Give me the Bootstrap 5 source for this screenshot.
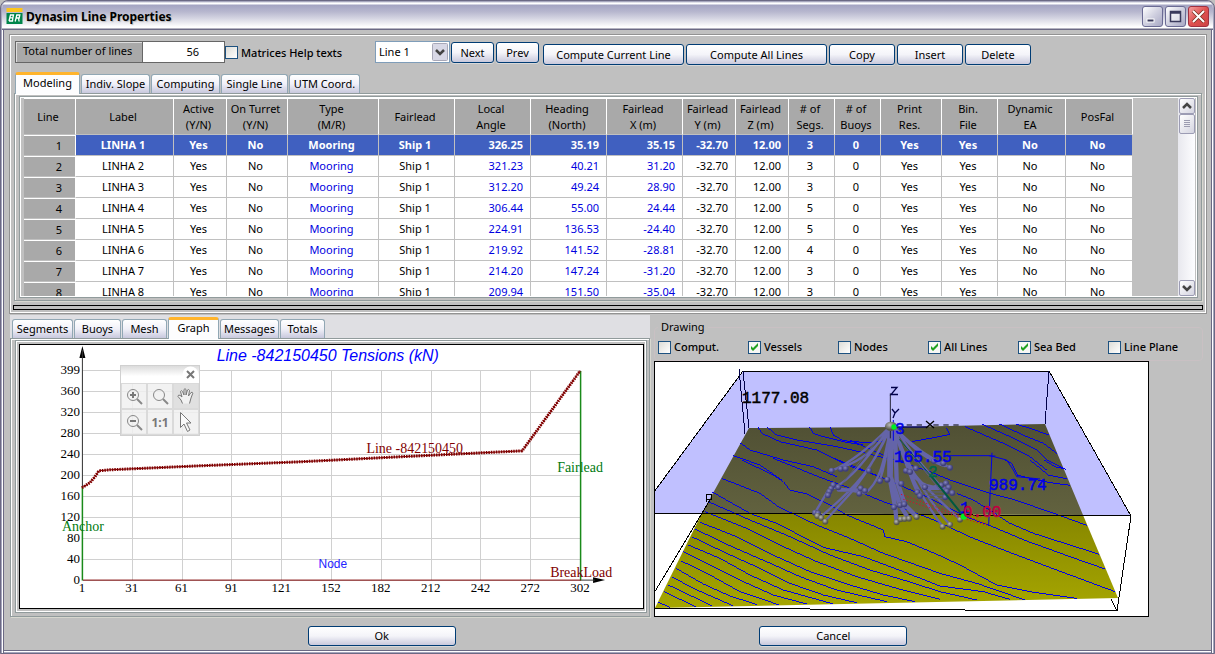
<!DOCTYPE html>
<html lang="en">
<head>
<meta charset="utf-8">
<meta name="viewport" content="width=device-width, initial-scale=1">
<title>Dynasim Line Properties</title>
<link href="https://cdn.jsdelivr.net/npm/bootstrap@5.3.0/dist/css/bootstrap.min.css" rel="stylesheet">
<style>
  body { background:#c0c0c0; font-family:"Noto Sans","Open Sans",sans-serif; font-size:11px; line-height:16px; color:#000; }
  .win { min-height:100vh; background:#c0c0c0; border:1px solid #6b6984; border-radius:8px 8px 0 0; box-shadow:inset 1px 0 0 #a5a5bd, inset -1px 0 0 #a5a5bd, inset 2px 0 0 #fff, inset -2px 0 0 #fff, inset 3px 0 0 #6b6984, inset -3px 0 0 #6b6984, inset 0 -1px 0 #a5a5bd, inset 0 -2px 0 #fff, inset 0 -3px 0 #6b6984; padding:0 3px 3px; }
  .titlebar { height:29px; margin:0 -2px; padding:2px 4px 0 4px; gap:3px; border-radius:7px 7px 0 0; background:linear-gradient(#8a8aa8 0,#fff 2px,#fff 3px,#a4a4c2 4px,#b8b8cf 11px,#d8d8e4 18px,#fff 26px,#fff 27px,#6b6984 28px); }
  .titlebar h1 { font-size:12px; line-height:16px; font-weight:700; margin:0; text-shadow:1px 1px 1px #bbb; }
  .capbtn { width:21px; height:21px; padding:0; border:1px solid #6b6b94; border-radius:3px; background:linear-gradient(135deg,#fff,#d0d0e0 50%,#a8a8c4); display:flex; }
  .capbtn.shut { background:linear-gradient(135deg,#f4a0a0,#e05050 50%,#cc4444); border-color:#a03040; }
  .etched { border:1px solid #929292; box-shadow:inset 0 0 0 1px #fff; }
  .upper { margin:4px 4px 0 5px; padding:6px 4px 3px; }
  .toolrow { height:24px; padding-left:1px; }
  .total { border:2px solid #666; border-width:1px; height:22px; flex:0 0 210px; }
  .total label { flex:0 0 127px; background:#a9a9a9; border-right:1px solid #666; box-shadow:inset 1px 1px 0 #ddd; padding:0 0 0 7px; line-height:18px; }
  .total input { width:81px; border:0; padding:0 25px 1px 0; text-align:right; }
  input.tick { appearance:none; width:13px; height:13px; margin:0; border:1px solid #1c5180; background:linear-gradient(135deg,#dcdcd7,#fff); flex:none; }
  input.tick:checked { background:#f7f7f5 url("data:image/svg+xml,%3Csvg xmlns='http://www.w3.org/2000/svg' viewBox='0 0 11 11'%3E%3Cpath d='M2 4v3l2 2 5-5V1L4 6z' fill='%2321a121'/%3E%3C/svg%3E"); }
  .tlabel { font-weight:500; }
  .helpbox { height:23px; width:150px; gap:3px; }
  .linesel { width:75px; height:22px; border:1px solid #7f9db9; background:#fff url("data:image/svg+xml,%3Csvg xmlns='http://www.w3.org/2000/svg' viewBox='0 0 16 18'%3E%3Crect x='.5' y='.5' width='15' height='17' rx='1' fill='%23d8d8e6' stroke='%23a8a8b8'/%3E%3Cpath d='M4 7l4 4 4-4' fill='none' stroke='%23444' stroke-width='2.500'/%3E%3C/svg%3E") no-repeat right 1px center/16px 18px; appearance:none; padding:0 0 0 3px; }
  .xbtn { height:21px; padding:0; border:1px solid #003c74; border-radius:3px; background:linear-gradient(#fff,#f4f4f9 50%,#c9c9dc); box-shadow:0 1px 0 #d8d8d8; color:#000; font-size:11px; line-height:18px; text-align:center; white-space:nowrap; }
  .steps { gap:2px; padding:1px 4px 0 1px; }
  .acts { gap:2px; padding-top:3px; }
  .w43 { width:43px; } .w66 { width:66px; } .w141 { width:141px; } .w148 { width:148px; height:20px; }
  .tabrow { height:21px; gap:1px; }
  .upper .tabrow { margin-top:7px; padding-left:1px; }
  .lcol .tabrow { padding-left:2px; }
  .xtab { height:19px; padding:0; border:1px solid #91a7b4; border-bottom:0; border-radius:3px 3px 0 0; background:linear-gradient(#fff,#f0f0f8 50%,#c8c8dd); font-size:11px; line-height:16px; color:#000; white-space:nowrap; }
  .xtab.on { height:22px; margin-bottom:-1px; border-top:3px solid #ffb42c; background:#fdfdfe; padding-bottom:4px; line-height:14px; position:relative; }
  .pane { border:1px solid #919b9c; box-shadow:inset 1px 1px 0 #fff, 1px 1px 0 #d8d8d0; padding:2px 3px 2px 4px; }
  .viewbox { border:1px solid #919b9c; box-shadow:inset 0 0 0 1px #fff; padding:1px 2px 1px 4px; height:202px; }
  .grid { width:1109px; table-layout:fixed; border-collapse:separate; border-spacing:0; margin:0; }
  .grid th { height:37px; background:#a9a9a9; font-weight:400; text-align:center; border-right:1px solid #fff; border-top:1px solid #fff; padding:0 3px 0 0; border-bottom:1px solid #c0c0c0; }
  .grid td { height:21px; background:#fff; text-align:center; border-right:1px solid #c0c0c0; border-bottom:1px solid #c0c0c0; padding:0 3px 0 0; line-height:20px; white-space:nowrap; }
  .grid td.n { text-align:right; padding-right:7px; }
  .grid tbody th { height:21px; text-align:right; padding-right:13px; line-height:18px; }
  .grid .b { color:#0000e0; }
  .grid tr.sel td { background:#4060c0; color:#fff; font-weight:700; }
  .vbar { width:17px; background:linear-gradient(90deg,#e8e8ee,#fdfdff); }
  .vbar button { width:16px; height:16px; padding:0; border:1px solid #9c9cb4; border-radius:2px; background:linear-gradient(135deg,#fff,#d4d4e0); display:flex; margin-left:1px; }
  .vbar .thumb { height:20px; }
  .splitbar { height:5px; border:1px solid #000; margin:4px -1px 0 -1px; }
  .lower { padding:1px 0 0 6px; gap:4px; }
  .lcol { flex:640 1 0; min-width:0; background:#dfdfe3; padding-top:2px; }
  .rcol { flex:557 1 0; min-width:0; }
  .lcol .pane { padding:1px 2px 3px 4px; background:#c0c0c0; }
  .inner { border:1px solid #919b9c; box-shadow:inset 0 0 0 1px #fff; padding:3px 2px 3px 3px; }
  .plot { border:1px solid #000; background:#fff; position:relative; }
  .plot svg.full, .scene svg { display:block; width:100%; height:auto; }
  .palette { position:absolute; left:100px; top:20px; width:80px; border:1px solid #d0d0d0; background:rgba(240,240,240,.85); }
  .palette .head { height:17px; background:linear-gradient(#dcdcdc,#fff 60%); }
  .palette .cells { display:grid; grid-template-columns:repeat(3,1fr); }
  .palette button { height:26px; padding:0; border:1px solid #dadada; background:transparent; color:#777; font:bold 12px "Noto Sans",sans-serif; display:flex; align-items:center; justify-content:center; }
  .palette .head button { width:17px; height:17px; border:0; }
  fieldset.draw { border:1px solid #c9c0c3; border-radius:4px; height:42px; margin:4px 8px 0 0; padding:0 0 0 3px; }
  fieldset.draw legend { float:none; width:auto; font-size:11px; line-height:16px; margin:0; padding:0 3px; }
  .ticks { padding-top:4px; }
  .ticks > div { flex:0 0 90px; gap:3px; }
  .scene { width:495px; max-width:100%; border:1px solid #000; background:#fff; }
  .scene text { font-family:"Liberation Mono",monospace; font-size:16px; }
  .foot { padding-top:9px; }
</style>
</head>
<body>
<div class="win d-flex flex-column">
  <header class="titlebar d-flex align-items-center">
    <svg width="17" height="17" viewBox="0 0 16 17" aria-hidden="true"><rect width="16" height="4" fill="#fdc51c"/><rect y="5" width="16" height="11" fill="#00854a"/><g fill="none" stroke="#fff" stroke-width="1.300"><path d="M2.500 13l1.500-6h3l-.6 2.800H3.300h3L6 13H2.500M8.700 13.500L10.300 7h3l-.6 3H9.600h2.400l.6 3.500"/></g></svg>
    <h1 class="flex-grow-1">Dynasim Line Properties</h1>
    <div class="d-flex" style="gap:2px">
      <button class="capbtn" aria-label="Minimize"><svg width="19" height="19"><rect x="4" y="12" width="7" height="3" fill="#3a3a5c" stroke="#fff"/></svg></button>
      <button class="capbtn" aria-label="Maximize"><svg width="19" height="19"><path d="M4.500 4.500h10v10h-10zM4 6h11" fill="#fff" fill-opacity=".5" stroke="#3a3a5c" stroke-width="1.500"/></svg></button>
      <button class="capbtn shut" aria-label="Close"><svg width="19" height="19"><path d="M4 4l11 11M15 4L4 15" stroke="#732" stroke-width="3.500"/><path d="M4 4l11 11M15 4L4 15" stroke="#fff" stroke-width="2"/></svg></button>
    </div>
  </header>

  <section class="upper etched">
    <div class="toolrow d-flex align-items-start">
      <div class="total d-flex"><label for="total">Total number of lines</label><input id="total" value="56"></div>
      <div class="helpbox d-flex align-items-center flex-shrink-0"><input class="tick" type="checkbox" id="help"><label class="tlabel" for="help">Matrices Help texts</label></div>
      <select class="linesel flex-shrink-0" aria-label="Line"><option>Line 1</option></select>
      <div class="steps d-flex flex-shrink-0"><button class="xbtn w43">Next</button><button class="xbtn w43">Prev</button></div>
      <div class="acts d-flex flex-shrink-0"><button class="xbtn w141">Compute Current Line</button><button class="xbtn w141">Compute All Lines</button><button class="xbtn w66">Copy</button><button class="xbtn w66">Insert</button><button class="xbtn w66">Delete</button></div>
    </div>
    <div class="tabrow d-flex align-items-end" role="tablist">
      <button class="xtab on" role="tab" style="width:65px">Modeling</button><button class="xtab" role="tab" style="width:69px">Indiv. Slope</button><button class="xtab" role="tab" style="width:69px">Computing</button><button class="xtab" role="tab" style="width:67px">Single Line</button><button class="xtab" role="tab" style="width:71px">UTM Coord.</button>
    </div>
    <div class="pane">
      <div class="viewbox d-flex justify-content-between">
        <div class="overflow-hidden h-100">
          <table class="grid">
            <colgroup><col style="width:52px"><col style="width:98px"><col style="width:53px"><col style="width:61px"><col style="width:91px"><col style="width:76px"><col style="width:76px"><col style="width:76px"><col style="width:76px"><col style="width:53px"><col style="width:53px"><col style="width:46px"><col style="width:46px"><col style="width:61px"><col style="width:56px"><col style="width:68px"><col style="width:67px"></colgroup>
            <thead><tr><th>Line</th><th>Label</th><th>Active<br>(Y/N)</th><th>On Turret<br>(Y/N)</th><th>Type<br>(M/R)</th><th>Fairlead</th><th>Local<br>Angle</th><th>Heading<br>(North)</th><th>Fairlead<br>X (m)</th><th>Fairlead<br>Y (m)</th><th>Fairlead<br>Z (m)</th><th># of<br>Segs.</th><th># of<br>Buoys</th><th>Print<br>Res.</th><th>Bin.<br>File</th><th>Dynamic<br>EA</th><th>PosFal</th></tr></thead>
            <tbody id="rows"></tbody>
          </table>
        </div>
        <div class="vbar d-flex flex-column flex-shrink-0">
          <button aria-label="Scroll up"><svg width="14" height="14"><path d="M3 9l4-4 4 4" fill="none" stroke="#444" stroke-width="2.500"/></svg></button>
          <button class="thumb" aria-label="Scroll thumb"><svg width="14" height="18"><path d="M4 5.500h6M4 7.500h6M4 9.500h6M4 11.500h6" stroke="#9c9cb0"/></svg></button>
          <button class="mt-auto" aria-label="Scroll down"><svg width="14" height="14"><path d="M3 5l4 4 4-4" fill="none" stroke="#444" stroke-width="2.500"/></svg></button>
        </div>
      </div>
    </div>
    <div class="splitbar"></div>
  </section>

  <div class="lower d-flex">
    <section class="lcol">
      <div class="tabrow d-flex align-items-end" role="tablist">
        <button class="xtab" role="tab" style="width:61px">Segments</button><button class="xtab" role="tab" style="width:47px">Buoys</button><button class="xtab" role="tab" style="width:45px">Mesh</button><button class="xtab on" role="tab" style="width:51px">Graph</button><button class="xtab" role="tab" style="width:59px">Messages</button><button class="xtab" role="tab" style="width:45px">Totals</button>
      </div>
      <div class="pane"><div class="inner">
        <div class="plot">
          <svg class="full" id="chart" viewBox="20 345 624 263" role="img" aria-label="Line tensions"></svg>
          <div class="palette">
            <div class="head d-flex justify-content-end"><button aria-label="Close palette"><svg width="17" height="17"><circle cx="8.500" cy="8.500" r="8" fill="#fff"/><path d="M5 5l7 7M12 5l-7 7" stroke="#777" stroke-width="2"/></svg></button></div>
            <div class="cells">
              <button aria-label="Zoom in"><svg width="18" height="18" fill="none" stroke="#888"><circle cx="8" cy="8" r="5.500"/><path d="M12 12l5 5" stroke-width="2"/><path d="M5 8h6M8 5v6" stroke="#777" stroke-width="2"/></svg></button>
              <button aria-label="Zoom"><svg width="18" height="18" fill="none" stroke="#888"><circle cx="8" cy="8" r="5.500"/><path d="M12 12l5 5" stroke-width="2"/></svg></button>
              <button aria-label="Pan" style="background:#e0e0e0"><svg width="18" height="18" fill="#f2f2f2" stroke="#777"><path d="M5.500 16.500L4 13 1 9.500q0-2 2-1.200L5 10 3.500 4.500q.6-1.700 2 0L7 8V2.500q1-1.700 2 0V8l1.500-5q1.300-1.200 2 .5L11.500 9 14 5.500q1.500-.8 1.800.7L14 11l-1.500 5.500"/></svg></button>
              <button aria-label="Zoom out"><svg width="18" height="18" fill="none" stroke="#888"><circle cx="8" cy="8" r="5.500"/><path d="M12 12l5 5" stroke-width="2"/><path d="M5 8h6" stroke="#777" stroke-width="2"/></svg></button>
              <button>1:1</button>
              <button aria-label="Select"><svg width="14" height="22" fill="#fafafa" stroke="#777"><path d="M1.500 1.500v15l3.500-3.500 3.500 7.500 2.500-1.500-3.500-7h4.500z"/></svg></button>
            </div>
          </div>
        </div>
      </div></div>
    </section>

    <section class="rcol">
      <fieldset class="draw"><legend>Drawing</legend>
        <div class="ticks d-flex" id="ticks"></div>
      </fieldset>
      <div class="scene">
        <svg viewBox="655 362 493 254" role="img" aria-label="Mooring view">
          <defs>
            <linearGradient id="far" x2="0" y2="1"><stop stop-color="#505034"/><stop offset="1" stop-color="#62623f"/></linearGradient>
            <linearGradient id="near" x2="0" y2="1"><stop stop-color="#868600"/><stop offset="1" stop-color="#a6a600"/></linearGradient>
            <radialGradient id="ball" cx=".4" cy=".35"><stop stop-color="#8585c0"/><stop offset="1" stop-color="#3e3e78"/></radialGradient>
            <radialGradient id="stone" cx=".4" cy=".35"><stop stop-color="#bbb"/><stop offset="1" stop-color="#555548"/></radialGradient>
          </defs>
          <path d="M743 371.500h306L1131 516 654 513V492z" fill="#c0c0ff"/>
          <path d="M749 428l151-1 145-3 38 91-381-2z" fill="url(#far)"/>
          <path d="M702 513l381 2 35 83-463 10z" fill="url(#near)"/>
          <!-- sea bed contours -->
          <g fill="none" stroke="#0000e8" stroke-width="3" shape-rendering="crispEdges">
            <g transform="translate(650 460) scale(.33333)">
              <path d="M275 0L370 45 400 65 420 90 470 102 540 135 590 165 700 210 705 230 770 245 870 287 930 315 1040 375 1140 395 1280 415"/>
              <path d="M370 -5L510 52 620 92 700 125 760 145 840 175 970 235 1100 285 1220 330 1395 395"/>
              <path d="M540 -10L690 50 840 115 960 175 1015 195 1130 243 1260 290 1365 327"/>
              <path d="M600 -60L720 -5 840 35 900 60 1020 100 1090 118 1220 163 1310 196"/>
              <path d="M920 100L970 120 1050 170 1080 190 1150 220 1260 255 1348 283"/>
              <path d="M1065 0L1085 10 1102 45 1140 55 1200 68 1260 76M1140 0L1195 45 1252 57M1182 0L1215 20 1248 28"/>
              <path d="M215 55L330 100 385 140 500 195 600 235 700 280 870 340 980 370 1125 420M185 95L300 160 380 190 520 262 640 290 760 335 870 378 1000 395 1080 418M175 125L300 180 420 230 540 285 660 330 760 360 870 395 980 420M165 155L290 205 400 260 500 305 620 350 740 385 870 418M150 187L260 230 380 290 480 335 600 375 700 405 795 425M135 207L250 262 350 305 450 350 560 390 710 425M125 230L230 280 330 325 420 370 520 405 620 428M115 255L210 295 300 345 400 390 550 432M100 275L200 325 280 365 370 405 470 432M92 302L180 345 270 395 388 435M78 325L160 372 240 408 322 434M65 350L130 385 250 438M55 375L185 437M42 395L137 440M25 427L60 442"/>
            </g>
            <g transform="translate(650 310) scale(.33333)">
              <path d="M325 352L335 370 390 395 500 420 590 465 690 500M352 352L380 375 440 390 560 410 650 430 710 445M478 350L490 370 520 380 580 395 640 405M540 350L550 375 580 392 640 397 700 395M270 398L300 420 400 450 490 470 560 500M250 437L330 465 395 510"/>
            </g>
            <g transform="translate(930 270) scale(.33333)">
              <path d="M105 470L220 520 300 560 350 600M155 462L240 500 320 540 350 570 400 595M208 462L290 500 340 520 380 550M258 462L300 475 357 495M-55 515L0 505 60 493 50 475"/>
            </g>
          </g>
          <!-- bounding box -->
          <g fill="none" stroke="#000" shape-rendering="crispEdges">
            <path d="M743 371.500h306M743 371L654 492M1049 371L1131 516 1117 611 1111 599M654 513l477 3M654 608l463 3M710 500l-56 93M706.500 502v-8h5v5h-5"/>
            <path d="M743 371l6 57M739 369l6 65M1049 371l-4 53" stroke="#000048"/>
          </g>
          <g transform="translate(800 380) scale(.33333)">
            <g fill="none" stroke="#6464a8" stroke-width="7" stroke-linecap="round">
              <path d="M265 145C220 190 150 250 95 272M268 145C235 200 190 240 125 262M270 145C200 230 150 310 85 330L45 398M270 145C220 250 190 290 160 330L75 424M268 150C220 260 170 320 60 412M270 150C250 260 235 310 195 340L100 322M270 150C260 230 250 270 240 300M290 150C340 200 400 240 450 263M290 150C340 210 400 250 435 258M285 150C310 230 320 270 355 345M290 150C330 220 390 280 440 340M285 160C320 260 330 310 400 320L440 310M285 150C320 280 370 360 428 440M290 160C330 280 400 380 450 434M290 170C320 270 350 300 480 418"/>
              <path d="M268 150V290L285 378 290 425M275 150L272 290 300 375 325 415M285 150L290 300 315 375 350 410" stroke-width="13"/>
              <path d="M115 330H180M370 325h70" stroke-width="10"/>
            </g>
            <g stroke="#585c86" stroke-width="3"><path d="M370 336h60M375 346h60M385 356h50M240 170L120 320M300 180L420 330"/></g>
            <g fill="url(#ball)" id="floats"></g>
            <g fill="url(#stone)" id="anchors"></g>
            <path d="M303 343L490 410M310 358L440 400 560 436M500 408L560 432M510 405L550 410" stroke="#d01030" stroke-width="3" stroke-dasharray="4 6" fill="none"/>
            <path d="M298 178L395 290" stroke="#005840" stroke-width="3" fill="none"/><path d="M395 290L490 408" stroke="#005840" stroke-width="6" fill="none"/>
            <path d="M271 40V175" stroke="#223" stroke-width="3"/>
            <path d="M290 141h90" stroke="#000060" stroke-width="4"/><path d="M320 135h60M400 135h90" stroke="#000" stroke-width="3" stroke-dasharray="16 14"/>
            <path d="M450 227H570L620 240 640 270 650 290 720 297M576 218L566 435M280 120V182M568 228h18" stroke="#0000e8" stroke-width="3" fill="none"/>
            <ellipse cx="273" cy="139" rx="18" ry="14" fill="url(#stone)"/><circle cx="282" cy="141" r="8" fill="#0e2"/><circle cx="491" cy="410" r="9" fill="#0e2"/>
          </g>
          <g stroke-width=".5">
            <text x="742" y="403" stroke="#000">1177.08</text>
            <g fill="#0000e8" stroke="#0000e8"><text x="894" y="462">165.55</text><text x="989" y="490">989.74</text><text x="895" y="434">3</text><text x="960" y="513">1</text></g>
            <text x="963" y="517" fill="#c00040" stroke="#c00040">0.00</text>
            <text x="928" y="477" fill="#006848" stroke="#006848">2</text>
          </g>
          <g fill="none" stroke="#000048" stroke-width="1.300"><path d="M891 387.500h6l-6 7h7M892 409l3 4 4-4M895 413l-2 5"/><path d="M926 421l8 7M934 421l-8 7" stroke="#000"/></g>
        </svg>
      </div>
    </section>
  </div>

  <footer class="foot d-flex justify-content-evenly">
    <button class="xbtn w148">Ok</button><button class="xbtn w148">Cancel</button>
  </footer>
</div>
<script src="https://cdn.jsdelivr.net/npm/bootstrap@5.3.0/dist/js/bootstrap.bundle.min.js"></script>
<script>
  const lines = [
    ['326.25','35.19','35.15',3],['321.23','40.21','31.20',3],['312.20','49.24','28.90',3],['306.44','55.00','24.44',5],
    ['224.91','136.53','-24.40',5],['219.92','141.52','-28.81',4],['214.20','147.24','-31.20',3],['209.94','151.50','-35.04',3]];
  document.getElementById('rows').innerHTML = lines.map((r, i) =>
    `<tr class="${i ? '' : 'sel'}"><th scope="row">${i + 1}</th><td>LINHA ${i + 1}</td><td>Yes</td><td>No</td><td class="${i ? 'b' : ''}">Mooring</td><td>Ship 1</td>` +
    r.slice(0, 3).map(v => `<td class="n ${i ? 'b' : ''}">${v}</td>`).join('') +
    `<td class="n">-32.70</td><td class="n">12.00</td><td>${r[3]}</td><td>0</td><td>Yes</td><td>Yes</td><td>No</td><td>No</td></tr>`).join('');

  document.getElementById('ticks').innerHTML = [['Comput.',0],['Vessels',1],['Nodes',0],['All Lines',1],['Sea Bed',1],['Line Plane',0]].map(([t, on], i) =>
    `<div class="d-flex align-items-center"><input class="tick" type="checkbox" id="t${i}"${on ? ' checked' : ''}><label class="tlabel" for="t${i}">${t}</label></div>`).join('');

  // chart: nodes 1..302 on x, tension 0..399 kN on y
  let g = '<g stroke="#d0d0d0" shape-rendering="crispEdges">';
  const xs = [1,31,61,91,121,152,182,212,242,272,302], ys = [0,40,80,120,160,200,240,280,320,360,399];
  xs.forEach((v, i) => g += `<path d="M${82.5 + i * 49.9} 370V580"/>`);
  ys.forEach((v, i) => g += `<path d="M83 ${580.5 - i * 21}H582"/>`);
  g += '</g><g font-family="Liberation Serif,serif" font-size="13">';
  xs.forEach((v, i) => g += `<text text-anchor="middle" x="${82 + i * 49.9}" y="592">${v}</text>`);
  ys.forEach((v, i) => g += `<text text-anchor="end" x="80" y="${584 - i * 21}">${v}</text>`);
  g += `</g><path d="M82.500 346l3 12h-6zM606 580.500l-12-3v6z"/><path d="M82.500 350V487M582 580.500h14" stroke="#333"/>
    <path d="M82.500 487V581M581.500 371V581" stroke="#1a8a1a" stroke-width="1.500"/><path d="M83 580.500H582" stroke="#800000"/>
    <g fill="none" stroke="#800000"><path id="t" d="M82 488L90 483 95 477 99 471 110 470 200 466 300 462 400 457 523 451 581 371"/><path stroke-width="3" stroke-dasharray="1.500 1" d="M82 488L90 483 95 477 99 471 110 470 200 466 300 462 400 457 523 451 581 371"/></g>
    <g font-family="Liberation Serif,serif" font-size="14"><text x="367" y="453" fill="#800000">Line -842150450</text><text x="551" y="577" fill="#800000">BreakLoad</text><text x="558" y="472" fill="#007a10">Fairlead</text><text x="62" y="531" fill="#007a10">Anchor</text></g>
    <text x="319" y="568" fill="#22f" font-family="Liberation Sans,sans-serif" font-size="12">Node</text>
    <text x="217" y="361" fill="#00f" font-family="Liberation Sans,sans-serif" font-size="16" font-style="italic">Line -842150450 Tensions (kN)</text>`;
  document.getElementById('chart').innerHTML = g;

  const dots = (id, pts, r) => document.getElementById(id).innerHTML = pts.map(p => `<circle cx="${p[0]}" cy="${p[1]}" r="${r}"/>`).join('');
  dots('floats', [[95,272],[122,267],[137,266],[207,272],[240,303],[262,299],[100,315],[93,326],[115,322],[88,335],[84,346],[182,325],[195,332],[178,341],[45,398],[54,400],[282,382],[300,376],[313,373],[318,272],[330,276],[348,265],[304,311],[402,243],[430,250],[450,263],[352,337],[360,348],[375,322],[424,316],[438,310],[446,322],[440,334],[457,339],[436,352]], 9);
  dots('anchors', [[52,408],[64,414],[76,425],[290,427],[302,418],[314,417],[327,416],[350,411],[428,440],[450,434],[480,419]], 9);
</script>
</body>
</html>
